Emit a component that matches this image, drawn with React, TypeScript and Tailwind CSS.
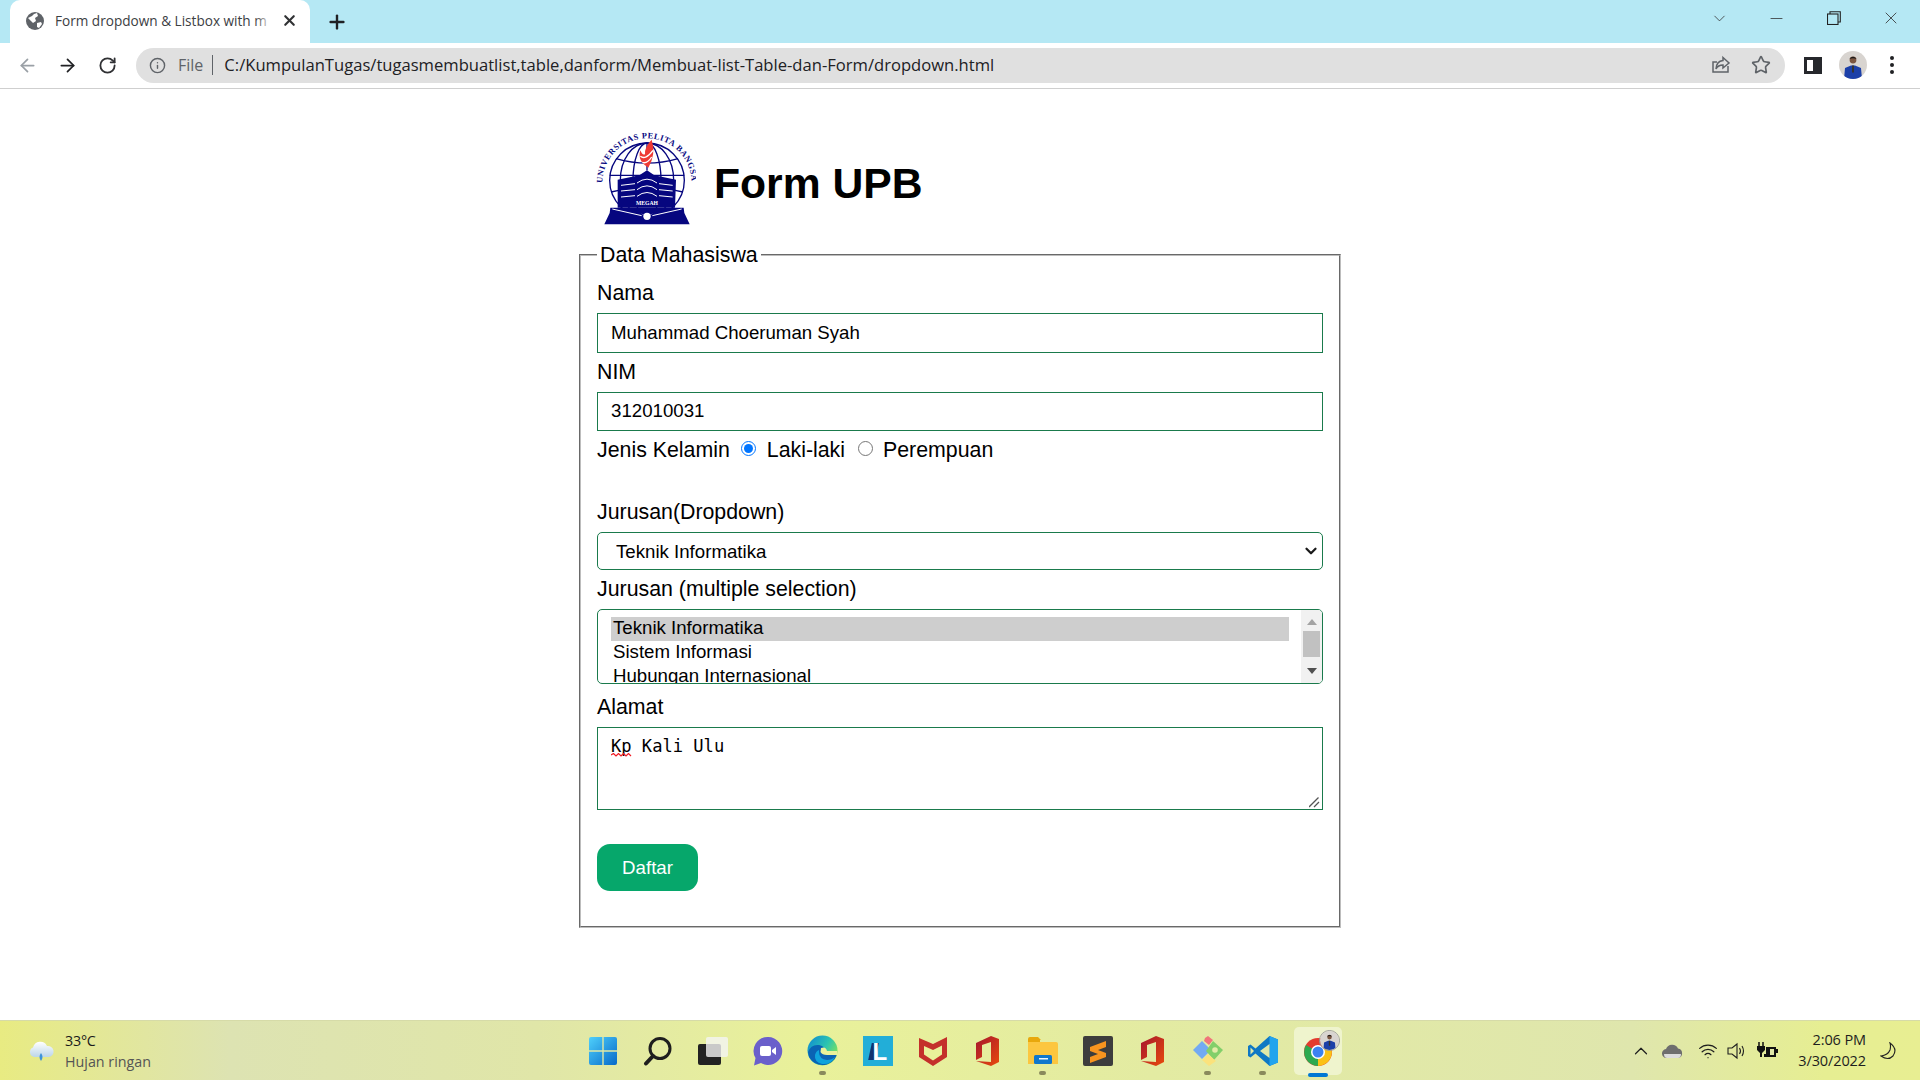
import { ChevronDown, ChevronUp, Minus, Plus, X, ArrowLeft, ArrowRight, RotateCw, Star, Info, Wifi } from 'lucide-react'

const sans = "font-['Liberation_Sans',Arial,sans-serif]"
const ui = "font-['Open_Sans','Noto_Sans',sans-serif]"

function Avatar({ size }: { size: number }) {
  return (
    <svg width={size} height={size} viewBox="0 0 28 28">
      <circle cx="14" cy="14" r="14" fill="#d8d4d0" />
      <clipPath id={`av${size}`}>
        <circle cx="14" cy="14" r="14" />
      </clipPath>
      <g clipPath={`url(#av${size})`}>
        <path d="M5 28 L6 17 L12 14.5 H16 L22 17 L23 28 Z" fill="#1b3fa8" />
        <path d="M13 14.5 H15 L15 21 L14 22 L13 21 Z" fill="#333" />
        <circle cx="14" cy="9" r="3.4" fill="#7a5540" />
        <path d="M10.4 8 Q14 3.6 17.6 8 Q14 6.6 10.4 8 Z" fill="#1a1a1a" />
      </g>
    </svg>
  )
}

function ChromeBar() {
  return (
    <div className={`${ui} shrink-0`}>
      <div className="flex h-[43px] items-end bg-[#b5e8f4] pl-[10px]">
        <div className="flex h-[43px] w-[300px] items-center rounded-t-[10px] bg-white pb-[2px] pl-[15px] pr-[12px]">
          <svg width="20" height="20" viewBox="0 0 20 20">
            <circle cx="10" cy="10" r="9" fill="#5f6368" />
            <path d="M3 7 L7 5 L9 3 L12 2 L13 5 L10 7 L11 10 L8 12 L6 10 Z M12 12 L16 11 L17 13 L14 17 L12 16 Z" fill="#fff" />
          </svg>
          <div className="relative ml-[10px] flex-1 overflow-hidden whitespace-nowrap text-[13.6px] leading-[20px] text-[#3c4043]">
            Form dropdown &amp; Listbox with m
            <div className="absolute inset-y-0 right-0 w-[18px] bg-gradient-to-r from-transparent to-white" />
          </div>
          <X size={17} strokeWidth={3} className="ml-[8px] text-[#303134]" />
        </div>
        <Plus size={22} strokeWidth={2.6} className="mb-[10px] ml-[16px] text-[#202124]" />
        <div className="ml-auto flex items-center self-start pt-[8px] text-[#333]">
          <ChevronDown size={19} strokeWidth={1} className="mr-[38px]" />
          <Minus size={19} strokeWidth={1} className="mr-[41px]" />
          <svg width="14" height="14" viewBox="0 0 14 14" fill="none" stroke="#222" strokeWidth="1.1" className="mr-[40px]">
            <rect x="0.5" y="3" width="10.5" height="10.5" />
            <path d="M3 3 V0.8 H13.3 V11 H11" />
          </svg>
          <X size={20} strokeWidth={1} className="mr-[19px]" />
        </div>
      </div>
      <div className="flex h-[46px] items-center border-b border-[#cfcfcf] bg-white pb-[1px]">
        <ArrowLeft size={21} strokeWidth={2} className="ml-[17px] text-[#9aa0a6]" />
        <ArrowRight size={21} strokeWidth={2} className="ml-[19px] text-[#202124]" />
        <RotateCw size={19} strokeWidth={2.3} className="ml-[20px] text-[#303134]" />
        <div className="ml-[19px] flex h-[35px] w-[1649px] items-center rounded-full bg-[#e0e0e0] pl-[13px] pr-[14px]">
          <Info size={17} strokeWidth={2} className="text-[#5f6368]" />
          <span className="ml-[12px] text-[16px] text-[#5f6368]">File</span>
          <span className="ml-[9px] h-[20px] w-px bg-[#5f6368]" />
          <span className="ml-[11px] whitespace-nowrap text-[16.6px] text-[#202124]">
            C:/KumpulanTugas/tugasmembuatlist,table,danform/Membuat-list-Table-dan-Form/dropdown.html
          </span>
          <svg width="20" height="20" viewBox="0 0 20 20" fill="none" stroke="#5f6368" strokeWidth="1.5" className="ml-auto mr-[20px]">
            <path d="M17 11 V17 H2 V7 H6" />
            <path d="M12 2.5 L18 8 L12 13 V10 Q7 10 5 14 Q5.5 6 12 5.5 Z" />
          </svg>
          <Star size={20} strokeWidth={2} className="text-[#5f6368]" />
        </div>
        <div className="ml-[19px] flex h-[17px] w-[18px] justify-end border-[3px] border-[#26282c] bg-white">
          <div className="h-full w-[6px] bg-[#26282c]" />
        </div>
        <div className="ml-[17px] flex">
          <Avatar size={28} />
        </div>
        <div className="ml-[23px] flex flex-col gap-[3px]">
          <span className="h-[4px] w-[4px] rounded-full bg-[#202124]" />
          <span className="h-[4px] w-[4px] rounded-full bg-[#202124]" />
          <span className="h-[4px] w-[4px] rounded-full bg-[#202124]" />
        </div>
      </div>
    </div>
  )
}

function Logo() {
  const navy = '#06067f'
  return (
    <svg width="100" height="93" viewBox="75 35 300 279" className="shrink-0">
      <path id="logoArc" d="M94 188 A134 134 0 0 1 362 188" fill="none" />
      <text fontFamily="'Liberation Serif', serif" fontWeight="700" fontSize="25" fill={navy}>
        <textPath href="#logoArc" textLength="415">UNIVERSITAS PELITA BANGSA</textPath>
      </text>
      <g fill="none" stroke={navy} strokeWidth="4">
        <circle cx="228" cy="180" r="112" />
        <ellipse cx="228" cy="180" rx="42" ry="112" />
        <ellipse cx="228" cy="180" rx="80" ry="112" />
        <path d="M228 68 V150" />
        <path d="M135 115 Q228 142 321 115" />
        <path d="M116 165 H340" />
        <path d="M120 215 Q228 190 336 215" />
        <path d="M145 255 Q228 235 311 255" />
      </g>
      <path d="M242 58 Q256 100 232 142 Q198 122 208 90 Q214 106 222 102 Q220 80 242 58 Z" fill="#ee3a35" />
      <path d="M208 108 Q224 120 246 90 M214 126 Q228 132 242 110" stroke="#fff" strokeWidth="4" fill="none" />
      <path d="M140 178 L205 165 L228 150 L250 165 L315 178 L312 262 H140 Z" fill={navy} />
      <g fill="none" stroke="#fff" strokeWidth="3">
        <path d="M198 188 Q228 165 258 188" />
        <path d="M198 208 Q228 185 258 208" />
        <path d="M198 228 Q228 205 258 228" />
        <path d="M150 195 L192 190 M150 212 L192 208 M150 230 L192 226 M264 190 L305 195 M264 208 L305 212 M264 226 L305 230" />
      </g>
      <text x="228" y="255" textAnchor="middle" fontFamily="'Liberation Serif', serif" fontWeight="700" fontSize="17" fill="#fff">MEGAH</text>
      <path d="M118 262 H338 L340 278 L250 278 L228 288 L206 278 L116 278 Z" fill={navy} />
      <path d="M116 278 L206 278 L228 290 L250 278 L340 278 L356 312 H100 Z" fill={navy} />
      <path d="M124 266 L212 286 M332 266 L244 286" stroke="#fff" strokeWidth="3" />
      <circle cx="228" cy="288" r="11" fill="#fff" />
    </svg>
  )
}

function Label({ children, className = '' }: { children: React.ReactNode; className?: string }) {
  return <label className={`block h-[26px] text-[21.33px] leading-[26px] text-black ${className}`}>{children}</label>
}

function Listbox() {
  return (
    <div className="flex h-[75px] overflow-hidden rounded-[5px] border border-[#1a7a4c] bg-white">
      <div className="flex-1 overflow-hidden pl-[13px] pr-[12px] pt-[7px] text-[18.67px] leading-[22px] text-black">
        <div className="bg-[#cecece] pb-[2px] pl-[2px]">Teknik Informatika</div>
        <div className="pb-[2px] pl-[2px]">Sistem Informasi</div>
        <div className="pb-[2px] pl-[2px]">Hubungan Internasional</div>
      </div>
      <div className="flex w-[21px] flex-col items-center bg-[#f1f1f1] px-[2px]">
        <svg width="10" height="6" viewBox="0 0 10 6" className="mt-[9px]">
          <path d="M5 0 L10 6 H0 Z" fill="#a3a3a3" />
        </svg>
        <div className="mt-[6px] h-[26px] w-full bg-[#c1c1c1]" />
        <svg width="10" height="6" viewBox="0 0 10 6" className="mt-[11px]">
          <path d="M0 0 H10 L5 6 Z" fill="#505050" />
        </svg>
      </div>
    </div>
  )
}

function Form() {
  return (
    <fieldset className={`${sans} mt-[16px] w-[762px] border-2 border-[#bdbdbd] px-[16px] pb-[35px] pt-[12px] [border-style:groove]`}>
      <legend className="px-[3px] pt-[2px] text-[21.33px] leading-[25px] text-black">Data Mahasiswa</legend>
      <Label className="mb-[7px]">Nama</Label>
      <input
        readOnly
        value="Muhammad Choeruman Syah"
        className="block h-[40px] w-full border border-[#1a7a4c] px-[13px] text-[18.67px] text-black outline-none"
      />
      <Label className="mb-[7px] mt-[6px]">NIM</Label>
      <input
        readOnly
        value="312010031"
        className="block h-[39px] w-full border border-[#1a7a4c] px-[13px] pb-[2px] text-[18.67px] text-black outline-none"
      />
      <div className="mt-[6px] flex h-[26px] items-center text-[21.33px] leading-[26px] text-black">
        <span>Jenis Kelamin</span>
        <input type="radio" name="jk" defaultChecked className="mb-[3px] ml-[11px] h-[15px] w-[15px] accent-[#0075ff]" />
        <span className="ml-[11px]">Laki-laki</span>
        <input type="radio" name="jk" className="mb-[3px] ml-[13px] h-[15px] w-[15px]" />
        <span className="ml-[10px]">Perempuan</span>
      </div>
      <Label className="mb-[7px] mt-[36px]">Jurusan(Dropdown)</Label>
      <div className="relative">
        <select className="block h-[38px] w-full appearance-none rounded-[5px] border border-[#1a7a4c] bg-white pl-[18px] pt-[2px] text-[18.67px] text-black outline-none">
          <option>Teknik Informatika</option>
          <option>Sistem Informasi</option>
          <option>Hubungan Internasional</option>
        </select>
        <ChevronDown size={18} strokeWidth={3} className="pointer-events-none absolute right-[3px] top-[10px] text-[#1a1a1a]" />
      </div>
      <Label className="mb-[7px] mt-[6px]">Jurusan (multiple selection)</Label>
      <Listbox />
      <Label className="mb-[7px] mt-[10px]">Alamat</Label>
      <div className="relative">
        <textarea
          readOnly
          spellCheck={false}
          value="Kp Kali Ulu"
          className="block h-[83px] w-full resize-none border border-[#1a7a4c] px-[13px] py-[8px] font-['DejaVu_Sans_Mono',monospace] text-[17.1px] leading-[20px] text-black outline-none"
        />
        <svg width="22" height="4" viewBox="0 0 22 4" className="absolute left-[14px] top-[26px]">
          <path d="M0 2 L2.5 0.5 L5 3 L7.5 0.5 L10 3 L12.5 0.5 L15 3 L17.5 0.5 L20 3" fill="none" stroke="#f01c24" strokeWidth="1.2" />
        </svg>
        <svg width="11" height="11" viewBox="0 0 11 11" className="absolute bottom-[2px] right-[3px]">
          <path d="M0 10 L9.5 0.5 M5 10 L10 5" stroke="#555" strokeWidth="1.3" />
        </svg>
      </div>
      <button className="mt-[34px] block h-[47px] w-[101px] rounded-[13px] bg-[#06a76b] text-[18.67px] text-white">Daftar</button>
    </fieldset>
  )
}

function WinLogo() {
  return (
    <svg width="30" height="30" viewBox="0 0 30 30">
      <defs>
        <linearGradient id="win" x1="0" y1="0" x2="1" y2="1">
          <stop offset="0" stopColor="#4fd0fb" />
          <stop offset="1" stopColor="#0669c9" />
        </linearGradient>
      </defs>
      <path d="M1 3 Q1 1 3 1 H14.3 V14.3 H1 Z M15.7 1 H27 Q29 1 29 3 V14.3 H15.7 Z M1 15.7 H14.3 V29 H3 Q1 29 1 27 Z M15.7 15.7 H29 V27 Q29 29 27 29 H15.7 Z" fill="url(#win)" />
    </svg>
  )
}

function SearchIcon() {
  return (
    <svg width="30" height="30" viewBox="0 0 30 30" fill="none" stroke="#1e1e1e">
      <circle cx="17" cy="12.5" r="10" strokeWidth="3" />
      <path d="M10 20 L3 27.5" strokeWidth="4" strokeLinecap="round" />
    </svg>
  )
}

function TaskView() {
  return (
    <svg width="30" height="30" viewBox="0 0 30 30">
      <rect x="0" y="8" width="23" height="21" rx="2" fill="#222" />
      <rect x="8" y="1" width="22" height="20" rx="2" fill="#f4f4f4" fillOpacity="0.8" />
    </svg>
  )
}

function ChatIcon() {
  return (
    <svg width="30" height="30" viewBox="0 0 30 30">
      <path d="M15 1 A14 14 0 1 1 8 27 L1 29.5 L2.5 22 A14 14 0 0 1 15 1 Z" fill="#6a5fcb" />
      <rect x="7" y="10" width="11" height="10" rx="2" fill="#fff" />
      <path d="M19 14 L23 11 V19 L19 16 Z" fill="#fff" />
    </svg>
  )
}

function EdgeIcon() {
  return (
    <svg width="31" height="31" viewBox="0 0 31 31">
      <defs>
        <linearGradient id="edge" x1="0" y1="0" x2="1" y2="0.6">
          <stop offset="0" stopColor="#0c86d6" />
          <stop offset="0.6" stopColor="#2cc4b0" />
          <stop offset="1" stopColor="#7fe35a" />
        </linearGradient>
      </defs>
      <circle cx="15.5" cy="15.5" r="15" fill="url(#edge)" />
      <path d="M1 17 Q4 9 12 10 Q18 11 17.5 16 H30 Q30 26 20 29.5 Q8 32 2 22 Z" fill="#0a63b4" />
      <path d="M12 17 Q12 24 20 25 Q25 25 28 22 Q24 30 15 29 Q7 27 8 20 Q9 16 12 15 Z" fill="#0fa3dc" />
      <path d="M14 13 Q19 11 20 16 H30 L30 20 H20 Q15 20 13.5 17 Z" fill="#e9f19a" />
    </svg>
  )
}

function LIcon() {
  return (
    <div className="relative h-[30px] w-[30px] bg-[#22aed8]">
      <span className="absolute left-[7px] top-[7px] h-[17px] w-[7px] -skew-x-12 bg-[#12336f]" />
      <span className={`${sans} absolute left-[10px] top-[3px] text-[24px] font-bold leading-[26px] text-white`}>L</span>
    </div>
  )
}

function ShieldIcon() {
  return (
    <svg width="28" height="30" viewBox="0 0 28 30">
      <path d="M0 2 L14 8 L28 1 V21 L14 30 L0 21 Z" fill="#c4302b" />
      <path d="M5 10 L14 14 L23 9.5 V18.5 L14 24.5 L5 18.5 Z" fill="#e9f19a" />
    </svg>
  )
}

function OfficeIcon() {
  return (
    <svg width="23" height="30" viewBox="0 0 23 30">
      <defs>
        <linearGradient id="office" x1="0" y1="0" x2="1" y2="1">
          <stop offset="0" stopColor="#a5152e" />
          <stop offset="1" stopColor="#e84a0c" />
        </linearGradient>
      </defs>
      <path d="M0 7 L15 0 L23 3 V26 L15 30 L0 25 L15 26 V6 L6 9 V21 L0 24 Z" fill="url(#office)" />
    </svg>
  )
}

function FolderIcon() {
  return (
    <svg width="30" height="27" viewBox="0 0 30 27">
      <path d="M0 2 Q0 0 2 0 H10 L13 3 H12 V8 H0 Z" fill="#e8a80c" />
      <path d="M0 5 H28 Q30 5 30 7 V27 H0 Z" fill="#fcc63f" />
      <rect x="6" y="18" width="18" height="9" rx="1.5" fill="#1177cc" />
      <rect x="11" y="21" width="9" height="1.5" fill="#e9f6ff" />
    </svg>
  )
}

function SublimeIcon() {
  return (
    <svg width="30" height="30" viewBox="0 0 30 30">
      <rect width="30" height="30" rx="2" fill="#3d3d3d" />
      <path d="M7 11 L23 5 V11 L15 14 L23 17 V21 L7 27 V21 L15 18 L7 15 Z" fill="#f8941f" />
    </svg>
  )
}

function KiteIcon() {
  return (
    <svg width="30" height="30" viewBox="0 0 30 30">
      <path d="M0 14 L9 5 L18 14 L9 23 Z" fill="#73aaf2" />
      <path d="M12 2 L15 0 L20 4 L16 9 L11 5 Z" fill="#f0757a" />
      <path d="M20 5 L30 14 L21 24 L13 15 Z" fill="#82cf6a" />
      <circle cx="22" cy="14" r="2.8" fill="#e4eba8" />
      <path d="M9 24 L15 18 L23 25 L16 30 Z" fill="#fbe27c" />
    </svg>
  )
}

function VsCodeIcon() {
  return (
    <svg width="30" height="30" viewBox="0 0 30 30">
      <path d="M21.5 0 L30 3.5 V26.5 L21.5 30 L7.5 17.5 L2.5 21.5 L0 20 V10 L2.5 8.5 L7.5 12.5 Z" fill="#0f78c4" />
      <path d="M21.5 0 L30 3.5 V26.5 L21.5 30 Z" fill="#22a4ee" />
      <path d="M21.5 8 V22 L12 15 Z" fill="#e0e8a8" />
      <path d="M2.5 11.5 L6 15 L2.5 18.5 Z" fill="#e0e8a8" />
    </svg>
  )
}

function ChromeIcon() {
  return (
    <div className="relative h-[48px] w-[48px] rounded-[5px] bg-[#eff4cd]">
      <svg width="28" height="28" viewBox="0 0 28 28" className="absolute left-[10px] top-[11px]">
        <circle cx="14" cy="14" r="14" fill="#e33b2e" />
        <path d="M14 14 L26 7 A14 14 0 0 1 14 28 Z" fill="#fbc116" />
        <path d="M14 14 L14 28 A14 14 0 0 1 2 7 Z" fill="#2da94f" />
        <circle cx="14" cy="14" r="7" fill="#fff" />
        <circle cx="14" cy="14" r="5.5" fill="#3b82f0" />
      </svg>
      <div className="absolute left-[25px] top-[3px] flex rounded-full border border-[#999]">
        <Avatar size={19} />
      </div>
    </div>
  )
}

const dock = [
  { key: 'win', icon: <WinLogo /> },
  { key: 'search', icon: <SearchIcon /> },
  { key: 'task', icon: <TaskView /> },
  { key: 'chat', icon: <ChatIcon /> },
  { key: 'edge', icon: <EdgeIcon />, dot: true },
  { key: 'l', icon: <LIcon /> },
  { key: 'shield', icon: <ShieldIcon /> },
  { key: 'office', icon: <OfficeIcon /> },
  { key: 'folder', icon: <FolderIcon />, dot: true },
  { key: 'sublime', icon: <SublimeIcon /> },
  { key: 'office2', icon: <OfficeIcon /> },
  { key: 'kite', icon: <KiteIcon />, dot: true },
  { key: 'vscode', icon: <VsCodeIcon />, dot: true },
  { key: 'chrome', icon: <ChromeIcon />, active: true },
]

function Taskbar() {
  return (
    <div className={`${ui} flex h-[60px] shrink-0 items-stretch border-t border-[#d6dba8] bg-[linear-gradient(90deg,#e8eb82_0%,#dde3b2_12%,#e0e6a8_28%,#e9f19a_42%,#e3eba2_60%,#dfe6ad_85%,#e6ee92_95%,#e8ee92_100%)]`}>
      <div className="flex w-[575px] items-center pl-[27px]">
        <svg width="28" height="24" viewBox="0 0 28 24">
          <defs>
            <linearGradient id="cloud" x1="0" y1="0" x2="0" y2="1">
              <stop offset="0" stopColor="#ffffff" />
              <stop offset="1" stopColor="#bcd6ea" />
            </linearGradient>
          </defs>
          <path d="M7 18 A5 5 0 0 1 6 8.5 A7.5 7.5 0 0 1 20 7 A5.5 5.5 0 0 1 22 18 Z" fill="url(#cloud)" />
          <path d="M14 14 Q17 18 14 22 Q11 18 14 14 Z" fill="#3e93d8" />
        </svg>
        <div className="ml-[10px] flex flex-col text-[14.3px] leading-[21px]">
          <span className="tracking-[-0.2px] text-[#1a1a1a]">33°C</span>
          <span className="text-[#555]">Hujan ringan</span>
        </div>
      </div>
      <div className="flex w-[770px]">
        {dock.map((item) => (
          <div key={item.key} className="relative flex w-[55px] items-center justify-center">
            {item.icon}
            {item.dot && <span className="absolute bottom-[5px] h-[4px] w-[7px] rounded-full bg-[#8a8a5c]" />}
            {item.active && <span className="absolute bottom-[3px] h-[4px] w-[20px] rounded-full bg-[#0078d4]" />}
          </div>
        ))}
      </div>
      <div className="flex flex-1 items-center text-[#1e1e1e]">
        <ChevronUp size={22} strokeWidth={1.3} className="ml-[285px]" />
        <svg width="21" height="14" viewBox="0 0 21 14" className="ml-[10px]">
          <path d="M5 14 A4.5 4.5 0 0 1 4 5 A6.5 6.5 0 0 1 16 4.5 A4.8 4.8 0 0 1 16 14 Z" fill="#6e6e6e" />
          <path d="M2 10 H19 Q19 14 16 14 H5 Q2 14 2 10 Z" fill="#dcdcdc" />
        </svg>
        <Wifi size={20} strokeWidth={1.5} className="ml-[15px]" />
        <svg width="20" height="18" viewBox="0 0 20 18" fill="none" stroke="#1e1e1e" strokeWidth="1.1" className="ml-[9px]">
          <path d="M1 6 H5 L10 2 V16 L5 12 H1 Z" />
          <path d="M12.5 6 Q14.5 9 12.5 12 M15 4 Q18 9 15 14" />
        </svg>
        <svg width="21" height="18" viewBox="0 0 21 18" className="ml-[10px]">
          <path d="M2 0 V4 M6 0 V4" stroke="#111" strokeWidth="1.5" />
          <path d="M0 4 H8 V8 L5 11 V15 H3 V11 L0 8 Z" fill="#111" />
          <path d="M9 5 H19 V7 H21 V11 H19 V15 H7 V12 H9 Z" fill="#111" />
          <rect x="13" y="7" width="4" height="6" fill="#e0e8a8" />
        </svg>
        <div className="ml-[16px] flex w-[72px] flex-col items-end pb-[2px] text-[14.5px] leading-[21px] text-[#1e1e1e]">
          <span className="whitespace-nowrap tracking-[-0.1px]">2:06 PM</span>
          <span className="whitespace-nowrap tracking-[-0.1px]">3/30/2022</span>
        </div>
        <svg width="17" height="18" viewBox="0 0 17 18" fill="none" stroke="#222" strokeWidth="1.1" className="ml-[14px]">
          <path d="M10 1 Q18 7 13 14 Q8 19 1 14 Q8 13 10 8 Q11 4 10 1 Z" />
        </svg>
      </div>
    </div>
  )
}

export default function App() {
  return (
    <div className="flex h-screen flex-col overflow-hidden bg-white">
      <ChromeBar />
      <main className="flex flex-1 flex-col items-center pt-[43px]">
        <div className={`${sans} flex w-[762px] items-start pl-[17px]`}>
          <Logo />
          <h1 className="ml-[18px] mt-[27px] text-[42.67px] font-bold leading-[49px] text-black">Form UPB</h1>
        </div>
        <Form />
      </main>
      <Taskbar />
    </div>
  )
}
